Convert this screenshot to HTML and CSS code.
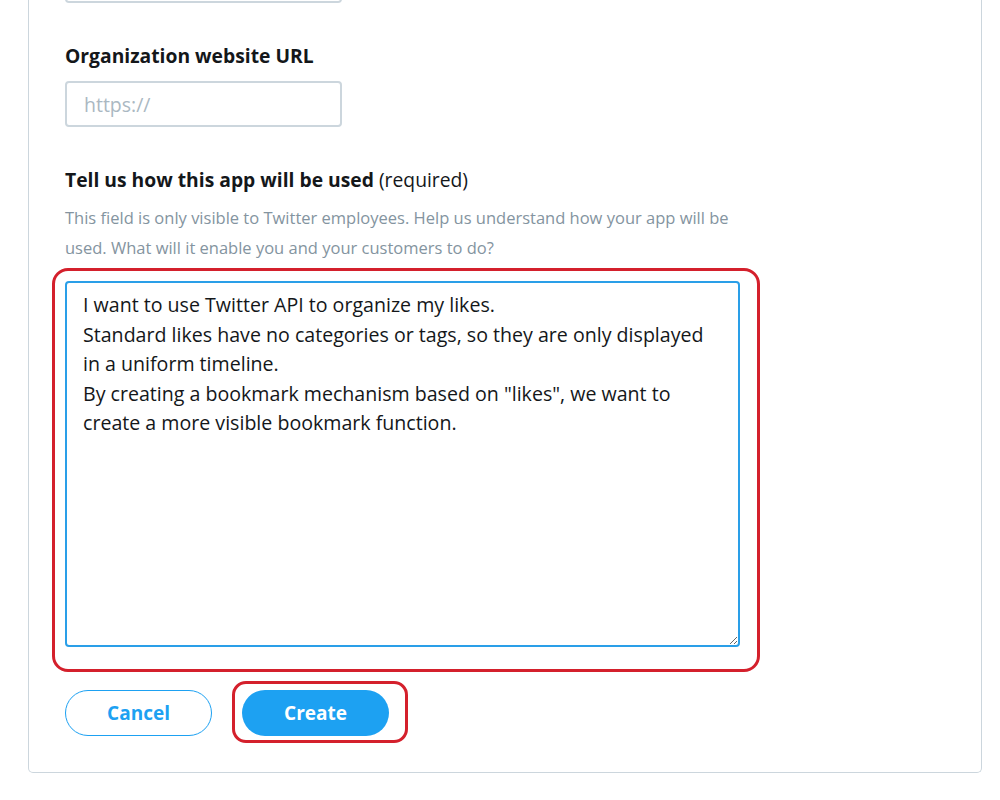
FILE: index.html
```html
<!DOCTYPE html>
<html lang="en">
<head>
    <meta charset="UTF-8">
    <meta name="viewport" content="width=device-width, initial-scale=1.0">
    <title>Create an app</title>
    <link rel="stylesheet" href="styles.css">
</head>
<body>
    <div class="card">
        <div class="form-group first">
            <input type="text" id="name" class="text-input" aria-label="Organization name" />
        </div>
        <div class="form-group">
            <label class="field-label" for="url">Organization website URL</label>
            <input type="text" id="url" class="text-input" placeholder="https://" />
        </div>
        <div class="form-group">
            <label class="field-label" for="usage">Tell us how this app will be used <span class="note">(required)</span></label>
            <p class="help">This field is only visible to Twitter employees. Help us understand how your app will be used. What will it enable you and your customers to do?</p>
            <div class="highlight highlight-area">
                <textarea id="usage" class="usage">I want to use Twitter API to organize my likes.
Standard likes have no categories or tags, so they are only displayed
in a uniform timeline.
By creating a bookmark mechanism based on "likes", we want to
create a more visible bookmark function.</textarea>
            </div>
        </div>
        <div class="actions">
            <button class="btn btn-outline">Cancel</button>
            <div class="highlight highlight-btn">
                <button class="btn btn-primary">Create</button>
            </div>
        </div>
    </div>
</body>
</html>
```

FILE: styles.css
```css
body {
    font-family: "Open Sans", "Noto Sans", Arial, sans-serif;
    margin: 0;
    padding: 0;
    background-color: #fff;
    color: #14171a;
}
.card {
    margin: -43px 18px 0 28px;
    padding: 0 0 29px 36px;
    border: 1px solid #ccd6dd;
    border-top: none;
    border-radius: 0 0 5px 5px;
    background: #fff;
}
.form-group {
    margin-top: 41px;
}
.form-group.first {
    margin-top: 0;
}
.field-label {
    display: block;
    font-size: 19.3px;
    font-weight: bold;
    line-height: 24px;
    margin-bottom: 13px;
}
.note {
    font-weight: normal;
}
.text-input {
    box-sizing: border-box;
    display: block;
    width: 277px;
    height: 46px;
    padding: 0 17px;
    border: 2px solid #ccd6dd;
    border-radius: 4px;
    font-family: inherit;
    font-size: 19.5px;
    color: #14171a;
}
.text-input::placeholder {
    color: #aab8c2;
}
.help {
    margin: -2px 0 0;
    max-width: 680px;
    font-size: 16.5px;
    line-height: 30px;
    color: #8494a0;
}
.highlight {
    border: 3px solid #d4202c;
    box-sizing: border-box;
}
.highlight-area {
    width: 708px;
    margin: 5px 0 0 -13px;
    padding: 10px 17px 22px 10px;
    border-radius: 16px;
}
.usage {
    box-sizing: border-box;
    display: block;
    width: 675px;
    height: 366px;
    padding: 7px 16px;
    border: 2px solid #2a9fe8;
    border-radius: 4px;
    font-family: inherit;
    font-size: 19.6px;
    line-height: 29.5px;
    color: #14171a;
    resize: vertical;
    outline: none;
}
.actions {
    display: flex;
    align-items: flex-start;
    margin-top: 9px;
}
.btn {
    width: 147px;
    height: 46px;
    border-radius: 23px;
    font-family: inherit;
    font-size: 19px;
    font-weight: bold;
    cursor: pointer;
}
.btn-outline {
    margin-top: 9px;
    background: #fff;
    color: #1da1f2;
    border: 1px solid #1da1f2;
}
.btn-primary {
    display: block;
    background: #1da1f2;
    color: #fff;
    border: none;
}
.highlight-btn {
    margin-left: 20px;
    padding: 6px 16px 4px 7px;
    border-radius: 14px;
}
```
